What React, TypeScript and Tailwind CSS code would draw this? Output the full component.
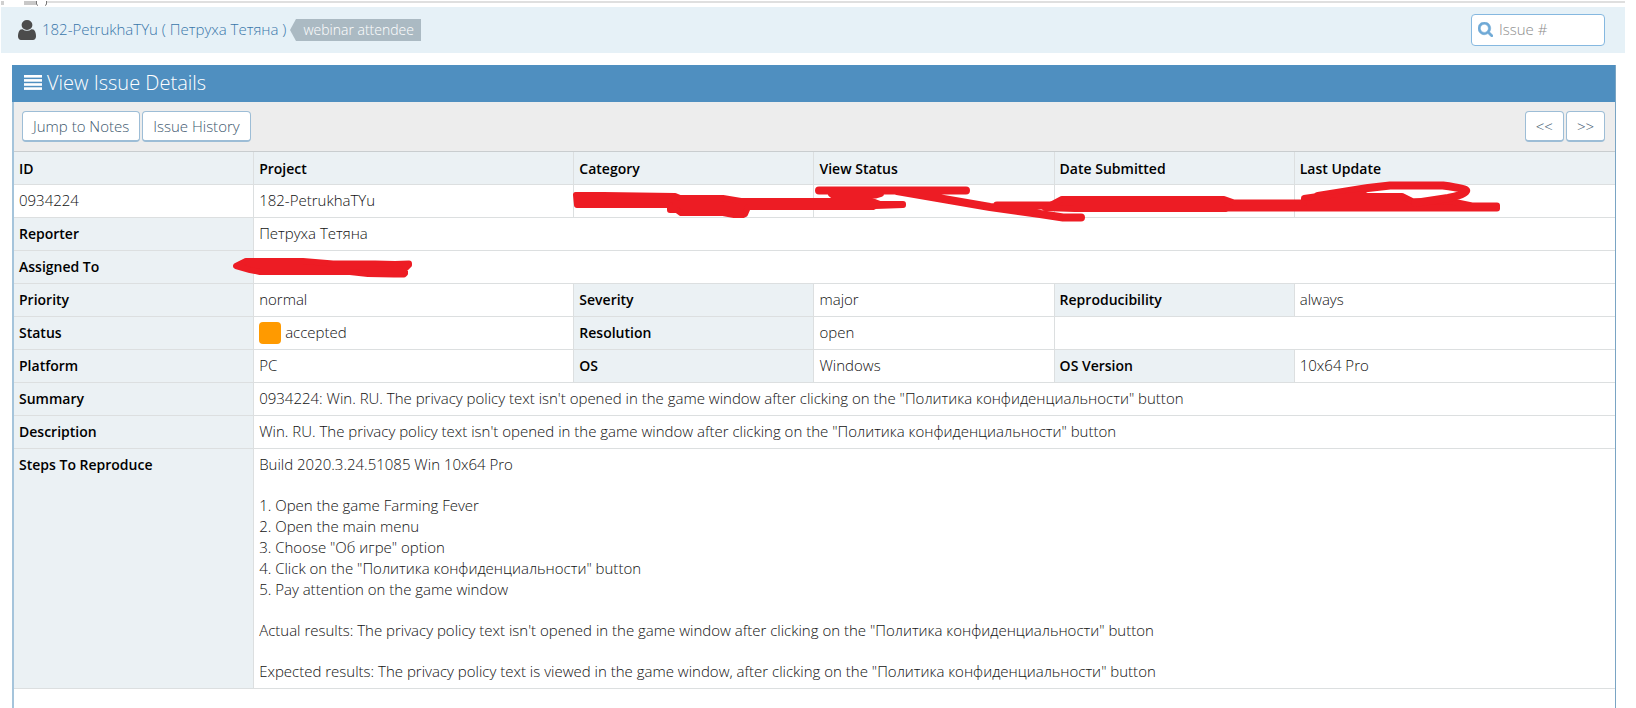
import type { ReactNode } from "react";

const STEPS: string[][] = [
  ["Build 2020.3.24.51085 Win 10x64 Pro"],
  [
    "1. Open the game Farming Fever",
    "2. Open the main menu",
    '3. Choose "Об игре" option',
    '4. Click on the "Политика конфиденциальности" button',
    "5. Pay attention on the game window",
  ],
  [
    'Actual results: The privacy policy text isn\'t opened in the game window after clicking on the "Политика конфиденциальности" button',
  ],
  [
    'Expected results: The privacy policy text is viewed in the game window, after clicking on the "Политика конфиденциальности" button',
  ],
];

const HEADINGS = ["ID", "Project", "Category", "View Status", "Date Submitted", "Last Update"];

const LABEL_BASE =
  "border-r border-b border-[#dcdfe0] bg-[#ebf1f4] px-[5px] text-left align-top text-[14px] font-semibold text-black last:border-r-0";

function Label({ children }: { children: ReactNode }) {
  return (
    <th scope="row" className={`${LABEL_BASE} pt-[5px] pb-[6px]`}>
      {children}
    </th>
  );
}

function Value({ children, span = 1 }: { children?: ReactNode; span?: number }) {
  return (
    <td
      colSpan={span}
      className="h-[33px] border-r border-b border-[#dcdfe0] px-[5px] pt-[5px] pb-[6px] align-top last:border-r-0"
    >
      {children}
    </td>
  );
}

function ToolButton({ children }: { children: ReactNode }) {
  return (
    <button
      type="button"
      className="h-[31px] rounded border border-b-2 border-[#9dbdd6] bg-white px-[10px] text-[15px] leading-[21px] text-[#40586e]"
    >
      {children}
    </button>
  );
}

function UserIcon() {
  return (
    <svg viewBox="256 128 1280 1536" className="h-[20px] w-[18px]" preserveAspectRatio="none" fill="#4c4c4c" aria-hidden="true">
      <path d="M1536 1399q0 109-62.5 187t-150.5 78h-854q-88 0-150.5-78t-62.5-187q0-85 8.5-160.5t31.5-152 58.5-131 94-89 134.5-34.5q131 128 313 128t313-128q76 0 134.5 34.5t94 89 58.5 131 31.5 152 8.500 160.500zM1280 512q0 159-112.500 271.500t-271.500 112.500-271.500-112.500-112.500-271.500 112.500-271.500 271.500-112.500 271.500 112.500 112.500 271.500z" />
    </svg>
  );
}

function SearchIcon() {
  return (
    <svg viewBox="64 128 1664 1664" className="size-[15px] shrink-0" fill="#6fa9d6" stroke="#6fa9d6" strokeWidth="60" aria-hidden="true">
      <path d="M1216 832q0-185-131.5-316.5t-316.5-131.5-316.5 131.5-131.5 316.5 131.5 316.5 316.5 131.5 316.5-131.5 131.5-316.5zm512 832q0 52-38 90t-90 38q-54 0-90-38l-343-342q-179 124-399 124-143 0-273.5-55.5t-225-150-150-225-55.5-273.5 55.5-273.5 150-225 225-150 273.5-55.5 273.5 55.5 225 150 150 225 55.5 273.5q0 220-124 399l343 343q37 37 37 90z" />
    </svg>
  );
}

function BarsIcon() {
  return (
    <svg viewBox="0 0 18 15" className="h-[15px] w-[18px]" fill="white" aria-hidden="true">
      <rect y="0" width="18" height="2.6" />
      <rect y="4.1" width="18" height="2.6" />
      <rect y="8.2" width="18" height="2.6" />
      <rect y="12.3" width="18" height="2.6" />
    </svg>
  );
}

/* Red marker strokes drawn over the hidden values */
function Redactions() {
  return (
    <svg
      viewBox="14 151 1601 130"
      preserveAspectRatio="none"
      className="pointer-events-none absolute top-0 left-0 h-[130px] w-full"
      fill="#ed1c24"
      stroke="#ed1c24"
      strokeWidth="6"
      strokeLinecap="round"
      strokeLinejoin="round"
      aria-hidden="true"
    >
      <path d="M576 194H603L675 195L680 197H723L741 200H872L880 203H903V204L875 205L873 206H748L745 213L743 214H734L723 212H681L677 209H670V204H577Z" />
      <path d="M831 193H881L876 194.500H833Z" />
      <path d="M819 189.500H966M897 190L990 206L1040 213L1063 216.500H1081M997 204.500H1062" fill="none" strokeWidth="8" />
      <path d="M1062 198H1224L1234 201.500H1304V197L1318 195H1402L1412 200L1455 201L1472 204.500H1497V207.500H1226V208H1075L1045 207Z" />
      <path d="M1318 195L1368 187L1390 184.500H1443Q1468 188 1466 190Q1464 194 1448 197L1415 202" fill="none" strokeWidth="8" />
      <path d="M1325 194L1366 190V196H1325Z" strokeWidth="1" />
      <path d="M236 265L246 260H303L333 262.500H375L395 263L409 262.500V264L405 268V272.500L404 273.500H394L368 273L350 271H260L250 269Z" />
    </svg>
  );
}

export default function App() {
  return (
    <div className="min-h-screen bg-white pr-[11px] font-['Open_Sans','Noto_Sans',sans-serif] text-[15px] leading-[21px] font-light text-[#111]">
      {/* Bottom edge of the strip above the breadcrumb bar */}
      <div className="flex h-[7px] items-start pt-px pl-px">
        <div className="h-1 w-[3px] bg-[#d0d0d0]" />
        <div className="h-1 w-5" />
        <div className="h-1 w-3 bg-[#c8c8c8]" />
        <svg viewBox="0 0 11 5" className="h-[5px] w-[11px]" fill="none" stroke="#777" aria-hidden="true">
          <path d="M.5 0V3Q.5 4 2 4.500M10.500 0V3Q10.500 4 9 4.500" />
        </svg>
        <div className="h-[2px] grow bg-[#dfdfdf]" />
      </div>

      <header className="ml-px flex h-[46px] items-center justify-between bg-[#e6f1f7] pr-5 pb-px pl-[17px]">
        <div className="flex items-center">
          <UserIcon />
          <a href="#user" className="ml-[6px] text-[#3a77aa]">
            182-PetrukhaTYu ( Петруха Тетяна )
          </a>
          <span className="ml-1 flex h-[22px] items-stretch text-[14px] text-white">
            <svg viewBox="0 0 6 22" className="h-[22px] w-[6px]" fill="#abbac3" aria-hidden="true">
              <path d="M6 0V22L0 11Z" />
            </svg>
            <span className="bg-[#abbac3] px-[7px] leading-[21px]">webinar attendee</span>
          </span>
        </div>
        <label className="flex h-8 w-[134px] items-center gap-[6px] rounded border border-[#85b8e0] bg-white px-[6px]">
          <SearchIcon />
          <input
            type="text"
            aria-label="Issue number"
            placeholder="Issue #"
            className="w-full min-w-0 text-[15px] outline-none placeholder:text-[#8c8c8c]"
          />
        </label>
      </header>

      <main className="mt-3 mr-[9px] ml-3 flex min-h-[calc(100vh-65px)] flex-col border-r border-l-2 border-r-[#7aa5c4] border-l-[#a5c4db]">
        <h1 className="-ml-[2px] flex h-[37px] items-center gap-[5px] bg-[#4f8fc0] pb-[2px] pl-3 text-[20px] text-white">
          <BarsIcon />
          View Issue Details
        </h1>

        <div className="flex items-center justify-between border-b border-[#c9cdcf] bg-[#ededed] py-[9px] pr-[10px] pl-2">
          <div className="flex gap-[2px]">
            <ToolButton>Jump to Notes</ToolButton>
            <ToolButton>Issue History</ToolButton>
          </div>
          <div className="flex gap-[2px]">
            <ToolButton>&lt;&lt;</ToolButton>
            <ToolButton>&gt;&gt;</ToolButton>
          </div>
        </div>

        <div className="relative">
          <table className="w-full table-fixed border-separate border-spacing-0">
            <colgroup>
              <col className="w-[15%]" />
              <col className="w-[20%]" />
              <col className="w-[15%]" />
              <col className="w-[15%]" />
              <col className="w-[15%]" />
              <col className="w-[20%]" />
            </colgroup>
            <thead>
              <tr>
                {HEADINGS.map((heading) => (
                  <th key={heading} scope="col" className={`${LABEL_BASE} pt-[6px] pb-[5px]`}>
                    {heading}
                  </th>
                ))}
              </tr>
            </thead>
            <tbody>
              <tr>
                <Value>0934224</Value>
                <Value>182-PetrukhaTYu</Value>
                <Value />
                <Value />
                <Value />
                <Value />
              </tr>
              <tr>
                <Label>Reporter</Label>
                <Value span={5}>Петруха Тетяна</Value>
              </tr>
              <tr>
                <Label>Assigned To</Label>
                <Value span={5} />
              </tr>
              <tr>
                <Label>Priority</Label>
                <Value>normal</Value>
                <Label>Severity</Label>
                <Value>major</Value>
                <Label>Reproducibility</Label>
                <Value>always</Value>
              </tr>
              <tr>
                <Label>Status</Label>
                <Value>
                  <span className="flex h-[21px] items-center gap-1">
                    <span className="size-[22px] rounded bg-[#ff9a00]" />
                    accepted
                  </span>
                </Value>
                <Label>Resolution</Label>
                <Value>open</Value>
                <Value span={2} />
              </tr>
              <tr>
                <Label>Platform</Label>
                <Value>PC</Value>
                <Label>OS</Label>
                <Value>Windows</Value>
                <Label>OS Version</Label>
                <Value>10x64 Pro</Value>
              </tr>
              <tr>
                <Label>Summary</Label>
                <Value span={5}>
                  0934224: Win. RU. The privacy policy text isn't opened in the game window after clicking on the
                  "Политика конфиденциальности" button
                </Value>
              </tr>
              <tr>
                <Label>Description</Label>
                <Value span={5}>
                  Win. RU. The privacy policy text isn't opened in the game window after clicking on the "Политика
                  конфиденциальности" button
                </Value>
              </tr>
              <tr>
                <Label>Steps To Reproduce</Label>
                <Value span={5}>
                  <div className="flex flex-col gap-5">
                    {STEPS.map((group) => (
                      <div key={group[0]}>
                        {group.map((line) => (
                          <p key={line}>{line}</p>
                        ))}
                      </div>
                    ))}
                  </div>
                </Value>
              </tr>
            </tbody>
          </table>
          <Redactions />
        </div>
      </main>
    </div>
  );
}
